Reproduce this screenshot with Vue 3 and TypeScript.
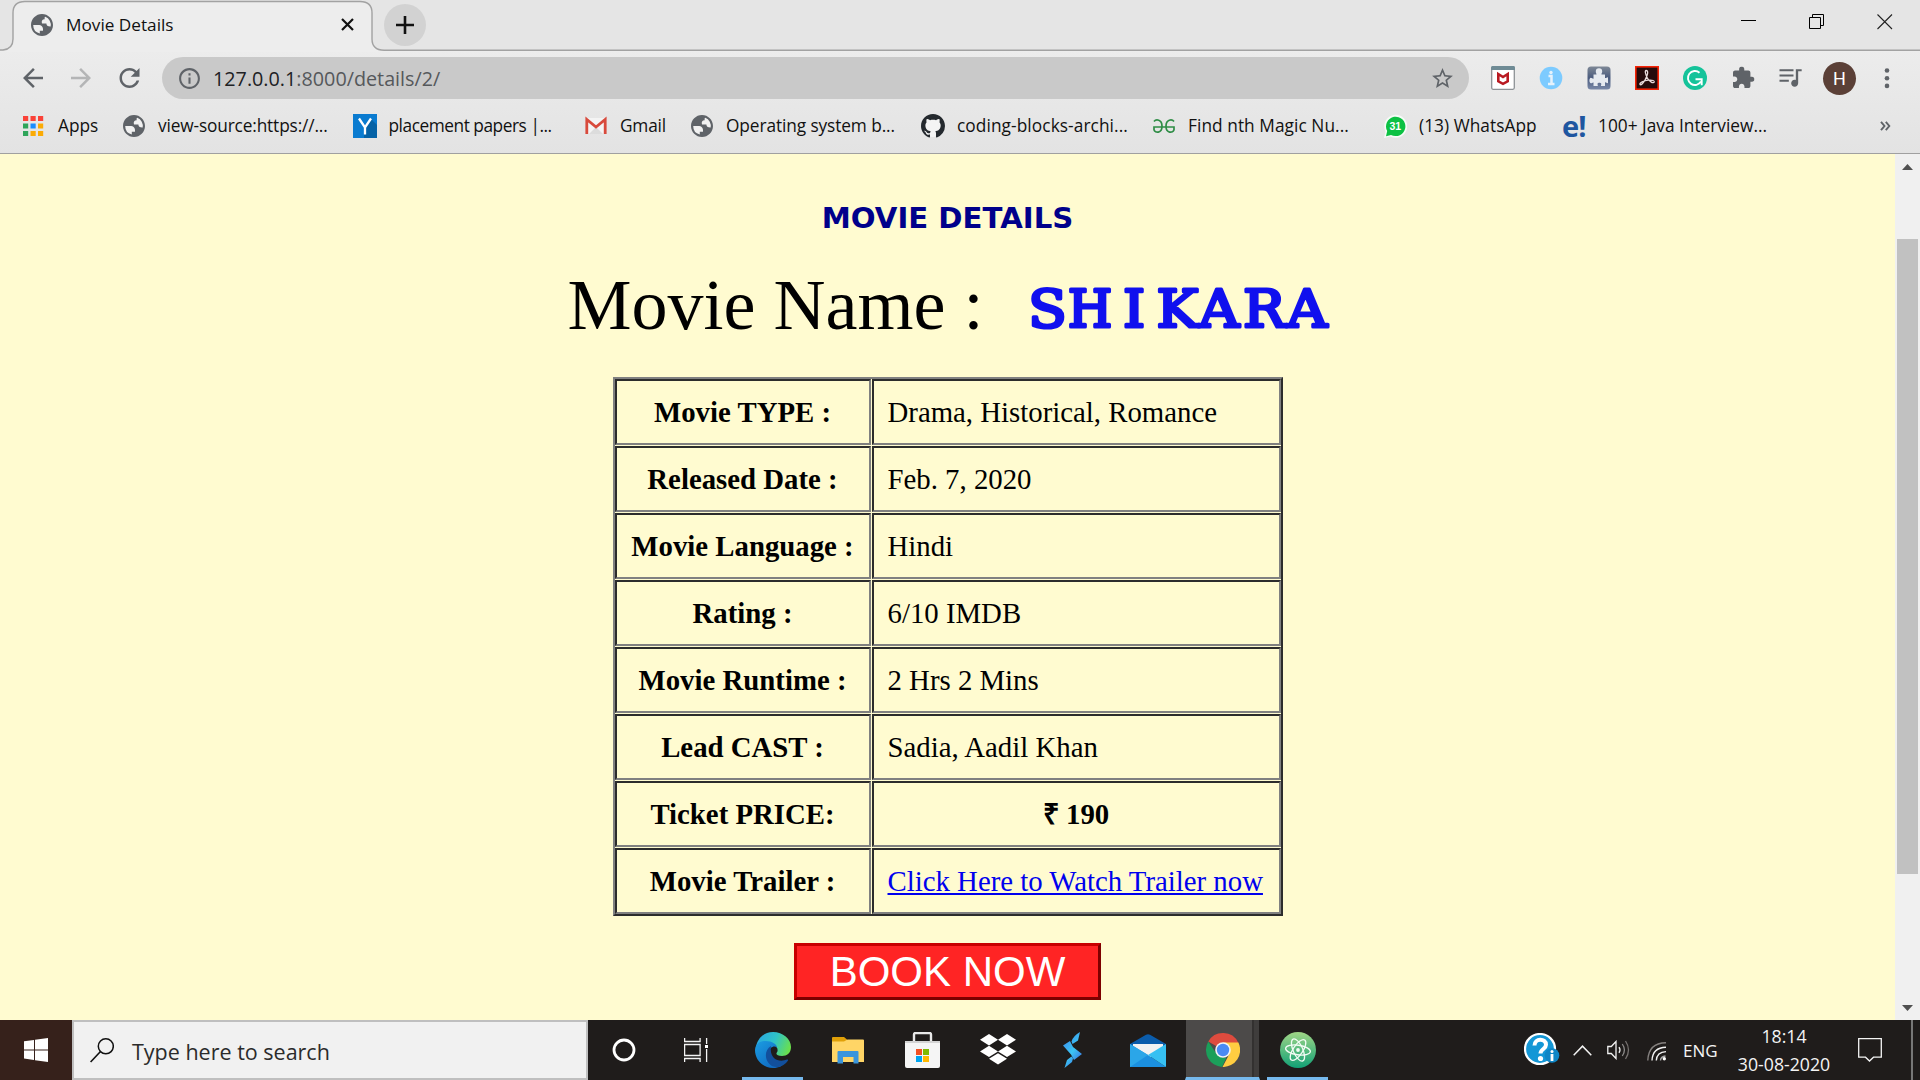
<script setup lang="ts">
interface Bookmark {
  icon: string
  label: string
  width: number
  spacing: number
}

interface Detail {
  label: string
  value: string
  kind: 'text' | 'price' | 'link'
}

const bookmarks: Bookmark[] = [
  { icon: 'apps', label: 'Apps', width: 100, spacing: 0 },
  { icon: 'globe', label: 'view-source:https://...', width: 230.5, spacing: -0.15 },
  { icon: 'yahoo', label: 'placement papers |...', width: 231.5, spacing: -0.46 },
  { icon: 'gmail', label: 'Gmail', width: 106, spacing: -0.2 },
  { icon: 'globe', label: 'Operating system b...', width: 231, spacing: -0.1 },
  { icon: 'github', label: 'coding-blocks-archi...', width: 231, spacing: 0.08 },
  { icon: 'gfg', label: 'Find nth Magic Nu...', width: 231, spacing: 0.06 },
  { icon: 'whatsapp', label: '(13) WhatsApp', width: 179, spacing: 0.05 },
  { icon: 'edureka', label: '100+ Java Interview...', width: 240, spacing: 0 },
]

const details: Detail[] = [
  { label: 'Movie TYPE :', value: 'Drama, Historical, Romance', kind: 'text' },
  { label: 'Released Date :', value: 'Feb. 7, 2020', kind: 'text' },
  { label: 'Movie Language :', value: 'Hindi', kind: 'text' },
  { label: 'Rating :', value: '6/10 IMDB', kind: 'text' },
  { label: 'Movie Runtime :', value: '2 Hrs 2 Mins', kind: 'text' },
  { label: 'Lead CAST :', value: 'Sadia, Aadil Khan', kind: 'text' },
  { label: 'Ticket PRICE:', value: '₹ 190', kind: 'price' },
  { label: 'Movie Trailer :', value: 'Click Here to Watch Trailer now', kind: 'link' },
]

const appColors = ['#fa4238', '#fa4238', '#fa4238', '#2fa55a', '#1a8cff', '#fbab05', '#2fa55a', '#fbab05', '#fbab05']
</script>

<template>
  <div class="screen">
    <svg class="defs" width="0" height="0" aria-hidden="true">
      <symbol id="globe" viewBox="2 2 20 20">
        <circle cx="12" cy="12" r="9.2" fill="#f1f1f1" />
        <path fill="#5f6368" d="M12 2C6.480 2 2 6.480 2 12s4.480 10 10 10 10-4.480 10-10S17.520 2 12 2zM4 12h4.400c3.400.02 4.900 1.730 4.500 5.120H10v2.650A8.020 8.020 0 0 1 4 12zm15.880 1.400c-2.600.1-3.900-.8-3.880-2.700h-4c-.67-2.600.1-4 2.400-4V5.200a1.500 1.500 0 0 1 .6-.7A8.020 8.020 0 0 1 19.880 13.400z" />
      </symbol>
      <symbol id="puzzle" viewBox="2 1 21 21">
        <path d="M20.500 11H19V7c0-1.100-.9-2-2-2h-4V3.500C13 2.120 11.880 1 10.500 1S8 2.120 8 3.500V5H4c-1.100 0-1.990.9-1.990 2v3.800H3.500c1.490 0 2.700 1.210 2.700 2.700s-1.210 2.700-2.700 2.700H2V20c0 1.100.9 2 2 2h3.800v-1.500c0-1.490 1.210-2.700 2.700-2.700 1.490 0 2.700 1.210 2.700 2.700V22H17c1.100 0 2-.9 2-2v-4h1.500c1.380 0 2.500-1.120 2.500-2.500S21.880 11 20.500 11z" />
      </symbol>
    </svg>

    <header class="chrome">
      <div class="titlebar">
        <svg class="tab-shape" width="1920" height="52" viewBox="0 0 1920 52">
          <path d="M0 50H3Q13 49 13 39V13Q13 1.500 25 1.500H360Q372 1.500 372 13V39Q372 50 384 50.300H1920V52H0Z" fill="#ededed" />
          <path d="M0 50H3Q13 49 13 39V13Q13 1.500 25 1.500H360Q372 1.500 372 13V39Q372 50 384 50.300H1920" fill="none" stroke="#a2a2a2" stroke-width="1.400" />
        </svg>
        <div class="tab">
          <svg class="fav" width="22" height="22"><use href="#globe" /></svg>
          <span class="tab-title">Movie Details</span>
          <svg class="tab-close" width="13" height="13" viewBox="0 0 13 13"><path d="M1 1l11 11M12 1L1 12" stroke="#111" stroke-width="2.200" /></svg>
        </div>
        <div class="new-tab">
          <svg width="18" height="18" viewBox="0 0 18 18"><path d="M9 0v18M0 9h18" stroke="#111" stroke-width="2.600" /></svg>
        </div>
        <div class="win-controls">
          <svg width="16" height="16" viewBox="0 0 16 16"><path d="M0 6.500h15" stroke="#000" /></svg>
          <svg width="16" height="16" viewBox="0 0 16 16"><path d="M.5 3.500h11v11H.5zM3.500 3.500V.5h11v11h-3" fill="none" stroke="#000" /></svg>
          <svg width="16" height="16" viewBox="0 0 16 16"><path d="M.5.5l14.500 14.500M15 .5L.5 15" stroke="#222" stroke-width="1.100" /></svg>
        </div>
      </div>

      <div class="toolbar">
        <div class="nav">
          <svg width="30" height="30" viewBox="0 0 24 24" fill="#5f6368"><path d="M20 11H7.830l5.590-5.590L12 4l-8 8 8 8 1.410-1.410L7.830 13H20v-2z" /></svg>
          <svg width="30" height="30" viewBox="0 0 24 24" fill="#b4b5b6"><path d="M12 4l-1.410 1.410L16.170 11H4v2h12.170l-5.580 5.590L12 20l8-8z" /></svg>
          <svg width="31" height="30" viewBox="0 0 24 24" fill="#5f6368"><path d="M17.650 6.350C16.200 4.900 14.210 4 12 4c-4.420 0-7.990 3.580-7.990 8s3.570 8 7.990 8c3.730 0 6.840-2.550 7.730-6h-2.080c-.82 2.330-3.040 4-5.650 4-3.310 0-6-2.690-6-6s2.690-6 6-6c1.660 0 3.140.69 4.220 1.780L13 11h7V4l-2.350 2.350z" /></svg>
        </div>
        <div class="omnibox">
          <svg width="25" height="25" viewBox="0 0 24 24" fill="#5f6368"><path d="M11 7h2v2h-2zm0 4h2v6h-2zm1-9C6.480 2 2 6.480 2 12s4.480 10 10 10 10-4.480 10-10S17.520 2 12 2zm0 18c-4.410 0-8-3.590-8-8s3.590-8 8-8 8 3.590 8 8-3.590 8-8 8z" /></svg>
          <span class="url"><span class="host">127.0.0.1</span>:8000/details/2/</span>
          <svg class="star" width="25" height="25" viewBox="0 0 24 24" fill="#5f6368"><path d="M22 9.240l-7.190-.62L12 2 9.190 8.630 2 9.240l5.460 4.730L5.820 21 12 17.270 18.180 21l-1.630-7.030L22 9.240zM12 15.400l-3.760 2.270 1-4.280-3.320-2.880 4.380-.38L12 6.100l1.710 4.040 4.380.38-3.320 2.880 1 4.280L12 15.400z" /></svg>
        </div>
        <div class="extensions">
          <svg width="24" height="24" viewBox="0 0 24 24">
            <rect x=".7" y=".7" width="22.600" height="22.600" rx="1.500" fill="#fff" stroke="#8d9296" stroke-width="1.300" />
            <path d="M0 1.500Q0 0 1.500 0h21Q24 0 24 1.500V4H0z" fill="#6f8b95" />
            <path d="M7.300 8v7.300L12 17.800l4.700-2.500V8L12 11z" fill="none" stroke="#b91a22" stroke-width="2.600" />
          </svg>
          <svg width="24" height="24" viewBox="0 0 24 24">
            <circle cx="12" cy="12" r="11.300" fill="#7dcbff" />
            <path d="M9.500 10h3v7M9 18h6.500" stroke="#e6f2fb" stroke-width="2.500" fill="none" /><circle cx="12" cy="6.500" r="1.700" fill="#e6f2fb" />
          </svg>
          <svg width="24" height="24" viewBox="0 0 24 24">
            <defs><linearGradient id="steel" x2="0" y2="1"><stop stop-color="#7e8896" /><stop offset=".5" stop-color="#4a5b7e" /><stop offset="1" stop-color="#7a89a8" /></linearGradient></defs>
            <rect x=".5" y=".5" width="23" height="23" rx="3.500" fill="url(#steel)" />
            <path d="M9.500 8.500C9.500 7.500 8.800 7 8.800 5.500a3.200 3.200 0 0 1 6.400 0c0 1.500-1 2-.7 3H18V12c1 .3 1.500-.8 3-.8v6c-1.500 0-2-1.100-3-.8V20h-4c-.2-1 .5-1.500.3-2.300-.6-1.400-3.300-1.300-3.800 0-.2.8.5 1.300.3 2.300H6.500v-3.500c-1-.3-1.500.8-2.600.8-2-.5-2-5 0-5.500 1.100 0 1.600 1.200 2.600.9V8.500z" fill="#e6eaf0" />
          </svg>
          <svg width="24" height="24" viewBox="0 0 24 24">
            <rect x=".8" y=".8" width="22.400" height="22.400" fill="#260b0b" stroke="#f62306" stroke-width="1.600" />
            <path d="M11 4.500c3 0 1.500 5-1 9.500-1.500 3-4 5.500-5 4.500-1-1.500 4-4 8.500-4.300 4.500-.3 6 .5 5.700 1.800-.8 2-5.500-.9-7.200-4.600C10.700 8.500 9.500 4.800 11 4.500z" fill="none" stroke="#eadcdc" stroke-width="1.300" />
          </svg>
          <svg width="24" height="24" viewBox="0 0 24 24">
            <circle cx="12" cy="12" r="12" fill="#15c39a" />
            <path d="M16.500 6.700A7 7 0 1 0 18 15.500" fill="none" stroke="#fff" stroke-width="1.900" />
            <path d="M12.500 13.300h6.200v6" fill="none" stroke="#fff" stroke-width="1.900" />
          </svg>
          <svg width="24" height="24" viewBox="0 0 24 24" fill="#5f6368"><use href="#puzzle" x="2" y=".5" width="21.500" height="21.500" /></svg>
          <svg width="28" height="28" viewBox="0 0 24 24" fill="#5f6368"><path d="M15 4.600H3v1.700h12V4.600zm0 4.500H3v1.700h12V9.100zM3 15.300h8v-1.700H3v1.700zM17 4.600v9.180c-.31-.11-.65-.18-1-.18-1.660 0-3 1.340-3 3s1.340 3 3 3 3-1.340 3-3V6.300h3V4.600h-5z" /></svg>
        </div>
        <div class="avatar">H</div>
        <svg class="menu" width="6" height="21" viewBox="0 0 6 21" fill="#5f6368"><circle cx="3" cy="2.500" r="2.300" /><circle cx="3" cy="10.200" r="2.300" /><circle cx="3" cy="17.900" r="2.300" /></svg>
      </div>

      <nav class="bookmarks">
        <div v-for="b in bookmarks" :key="b.label" class="bookmark" :style="{ width: b.width + 'px' }">
          <svg v-if="b.icon === 'apps'" width="24" height="24" viewBox="0 0 24 24">
            <rect v-for="(c, i) in appColors" :key="i" :x="1 + (i % 3) * 7.500" :y="2 + Math.floor(i / 3) * 7.500" width="5.200" height="5" :fill="c" />
          </svg>
          <svg v-else-if="b.icon === 'globe'" width="24" height="24"><use href="#globe" x="1" y="1" width="22" height="22" /></svg>
          <svg v-else-if="b.icon === 'yahoo'" width="24" height="24" viewBox="0 0 24 24">
            <rect width="24" height="24" fill="#0a7bd0" /><path d="M17 4l7 7v13H11V18z" fill="#0562a6" />
            <path d="M6 4.500l6 9 6-9M12 13v7.500" stroke="#fff" stroke-width="2.300" fill="none" />
          </svg>
          <svg v-else-if="b.icon === 'gmail'" width="24" height="24" viewBox="0 0 24 24">
            <rect x="2" y="4" width="20" height="16" rx="1" fill="#f4f4f4" /><path d="M5 20l7-7 7 7z" fill="#dcdcdc" />
            <path d="M2.800 20V5.500L12 13l9.200-7.500V20" fill="none" stroke="#d84a3c" stroke-width="2.800" />
          </svg>
          <svg v-else-if="b.icon === 'github'" width="24" height="24" viewBox="0 0 16 16">
            <circle cx="8" cy="8" r="7.300" fill="#f4f4f4" />
            <path fill="#24292e" d="M8 0C3.580 0 0 3.580 0 8c0 3.540 2.290 6.530 5.470 7.590.4.07.55-.17.55-.38 0-.19-.01-.82-.01-1.490-2.010.37-2.530-.49-2.690-.94-.09-.23-.48-.94-.82-1.130-.28-.15-.68-.52-.01-.53.63-.01 1.080.58 1.230.82.72 1.210 1.870.87 2.330.66.07-.52.28-.87.51-1.070-1.780-.2-3.640-.89-3.640-3.950 0-.87.31-1.590.82-2.150-.08-.2-.36-1.020.08-2.120 0 0 .67-.21 2.200.82.64-.18 1.320-.27 2-.27s1.360.09 2 .27c1.530-1.040 2.200-.82 2.200-.82.44 1.100.16 1.920.08 2.120.51.56.82 1.270.82 2.150 0 3.070-1.870 3.750-3.650 3.950.29.25.54.73.54 1.480 0 1.070-.01 1.930-.01 2.200 0 .21.15.46.55.38A8.010 8.010 0 0 0 16 8c0-4.420-3.580-8-8-8z" />
          </svg>
          <svg v-else-if="b.icon === 'gfg'" width="24" height="24" viewBox="0 0 24 24" fill="none" stroke="#2f8d46" stroke-width="1.700">
            <path d="M2 7.500c2-2.500 8-2.300 8 4.700s-7 7.500-8 3.500v-2.700h10" /><path d="M22 7.500c-2-2.500-8-2.300-8 4.700s7 7.500 8 3.500v-2.700H12" />
          </svg>
          <svg v-else-if="b.icon === 'whatsapp'" width="24" height="24" viewBox="0 0 24 24">
            <path d="M1 24l1.500-6.500A11.500 11.500 0 1 1 7.500 22.500z" fill="#f6fbf7" /><path d="M3 22.300l1.200-5.200A9.700 9.700 0 1 1 8 20.900z" fill="#0cc143" />
            <text x="12.300" y="16" text-anchor="middle" class="badge">31</text>
          </svg>
          <span v-else class="edureka">e!</span>
          <span class="bookmark-label" :style="{ letterSpacing: b.spacing + 'px' }">{{ b.label }}</span>
        </div>
        <svg class="overflow" width="11" height="10" viewBox="0 0 11 10"><path d="M1 .8L4.500 5 1 9.200M5.800.8L9.300 5 5.800 9.200" fill="none" stroke="#5f6368" stroke-width="1.900" /></svg>
      </nav>
    </header>

    <div class="viewport">
      <main class="page">
        <h2>MOVIE DETAILS</h2>
        <div class="movie">
          <span class="movie-key">Movie Name :</span>
          <svg class="movie-title" width="310" height="60" viewBox="0 0 310 60">
            <text transform="scale(1.08 1)" x="19.900 59.300 100 140.300 178.700 220.400 260.200" y="47.500">S<tspan class="narrow">H</tspan>IKARA</text>
          </svg>
        </div>
        <div class="table">
          <template v-for="d in details" :key="d.label">
            <div class="cell head">{{ d.label }}</div>
            <div class="cell" :class="d.kind">
              <a v-if="d.kind === 'link'">{{ d.value }}</a>
              <template v-else>{{ d.value }}</template>
            </div>
          </template>
        </div>
        <button class="book">BOOK NOW</button>
      </main>
      <aside class="scrollbar">
        <svg width="11" height="6" viewBox="0 0 11 6"><path d="M0 6L5.500 0 11 6z" fill="#505050" /></svg>
        <div class="thumb"></div>
        <svg class="down" width="11" height="6" viewBox="0 0 11 6"><path d="M0 0h11L5.500 6z" fill="#505050" /></svg>
      </aside>
    </div>

    <footer class="taskbar">
      <div class="start">
        <svg width="24" height="24" viewBox="0 0 24 24" fill="#fff"><path d="M0 3.300l10-1.400v9.500H0zM11 1.800L24 0v11.400H11zM0 12.500h10V22L0 20.600zM11 12.500h13V24l-13-1.800z" /></svg>
      </div>
      <div class="search">
        <svg width="24" height="25" viewBox="0 0 24 25"><circle cx="15.800" cy="8.300" r="7.500" fill="none" stroke="#111" stroke-width="1.500" /><path d="M10.500 13.500L.6 24" stroke="#111" stroke-width="1.600" /></svg>
        <span>Type here to search</span>
      </div>
      <div class="sys"><svg width="24" height="24" viewBox="0 0 24 24"><circle cx="12" cy="12" r="10" fill="none" stroke="#fff" stroke-width="2.800" /></svg></div>
      <div class="sys">
        <svg width="24" height="24" viewBox="0 0 24 24" fill="none" stroke="#f4f4f4" stroke-width="1.300"><path d="M.6 0v3.500h15.500V0M.6 6.500h15.500v11H.6zM.6 24v-3.500h15.500V24M22.600 0v6M22.600 11v13" /><path d="M21 7h3.200v3H21z" fill="#fff" stroke="none" /></svg>
      </div>
      <div class="apps">
        <div class="app running">
          <svg width="36" height="36" viewBox="0 0 36 36">
            <defs>
              <linearGradient id="eg" x1="0" y1=".3" x2="1" y2=".6"><stop stop-color="#2aa7e0" /><stop offset=".5" stop-color="#2fc3c8" /><stop offset="1" stop-color="#6be04a" /></linearGradient>
              <linearGradient id="eb" x1="0" y1="0" x2="1" y2="1"><stop stop-color="#1b9de2" /><stop offset="1" stop-color="#0d5cb8" /></linearGradient>
            </defs>
            <path d="M1 15C2.500 6 9.500 0 18 0c10 0 18 7 18 15 0 6-4 9-9 9-4 0-6-1.500-5.500-3 1.500-1.500 1.500-4 0-6C18 10 7 7 1 15z" fill="url(#eg)" />
            <path d="M0 18C.5 11 6 9 10.500 9c7 0 12 4 11.500 6.500-3-2.500-8 0-7.500 5.500.5 8 9 11.500 17 7.500C28.500 33.500 24 36 18 36 8 36 0 28 0 18z" fill="url(#eb)" />
            <path d="M16 14c-7 4-7 15 1 20 7 3 13-1 16-5.500.4-1-.2-1.300-1-.9C24 31 14 27 16 14z" fill="#124f9c" />
          </svg>
        </div>
        <div class="app">
          <svg width="32" height="27" viewBox="0 0 32 27"><path d="M0 1Q0 0 1 0h11l3 2.500V6H0z" fill="#e0a008" /><path d="M0 4.500h12l3.500-2H31q1 0 1 1V25H0z" fill="#ffd566" /><path d="M5.500 26.500V15q0-1 1-1h19q1 0 1 1v11.500h-5V20H11v6.500z" fill="#3b95dc" /></svg>
        </div>
        <div class="app">
          <svg width="36" height="36" viewBox="0 0 36 36"><path d="M9 12V2.500Q9 1 10.500 1h14Q26 1 26 2.500V12" fill="none" stroke="#e9e9e9" stroke-width="2.400" /><path d="M0 9h35v25q0 2-2 2H2q-2 0-2-2z" fill="#f5f5f5" /><path d="M0 9h35v2H0z" fill="#d4d4d4" /><path d="M11 17h6v6h-6z" fill="#f25022" /><path d="M18 17h6v6h-6z" fill="#7fba00" /><path d="M11 24h6v6h-6z" fill="#00a4ef" /><path d="M18 24h6v6h-6z" fill="#ffb900" /></svg>
        </div>
        <div class="app">
          <svg width="36" height="32" viewBox="0 0 36 32" fill="#fff"><path d="M9 0l9 5.700-9 5.700-9-5.700zM27 0l9 5.700-9 5.700-9-5.700zM9 11.800l9 5.700-9 5.600-9-5.600zM27 11.800l9 5.700-9 5.600-9-5.600zM9 24.800l9-5.600 9 5.600-9 5.700z" /></svg>
        </div>
        <div class="app">
          <svg width="19" height="36" viewBox="0 0 19 36"><defs><linearGradient id="sg" x1="0" y1="0" x2=".7" y2="1"><stop stop-color="#3b7fe8" /><stop offset=".6" stop-color="#3cc5f5" /><stop offset="1" stop-color="#3a6fe0" /></linearGradient></defs><path d="M17 0L15 8.500 9.500 12 8.500 9.500Q10 4 17 0zM7 9l3 6 9 7-8 6-3-5.500L0 13.500zM10 26.500l-1 3.500L1.500 36 4 28l4.500-3.500z" fill="url(#sg)" /></svg>
        </div>
        <div class="app">
          <svg width="36" height="33" viewBox="0 0 36 33"><path d="M0 10L16 .8q2-1.200 4 0L36 10v10H0z" fill="#0b5cab" /><path d="M3 10h30v8L18 24 3 18z" fill="#f2f2f2" /><path d="M0 10l18 11 18 12H0z" fill="#1b90e0" /><path d="M36 10L18 21l18 12z" fill="#36c0f2" /><path d="M0 10l18 11L0 33z" fill="#2ba6e8" /></svg>
        </div>
        <div class="app active">
          <svg width="34" height="34" viewBox="0 0 34 34">
            <path d="M17 17L2.280 8.500A17 17 0 0 1 32.300 9.700L30 12z" fill="#dd4b3e" />
            <path d="M17 9.500h15.400A17 17 0 0 1 16.500 34L23.500 20.800z" fill="#ffcd41" />
            <path d="M2.280 8.500L10.500 20.800 17 24.500l3.300.2L16 34A17 17 0 0 1 2.280 8.500z" fill="#1b9f5a" />
            <circle cx="17" cy="17" r="7.800" fill="#f4f4f4" /><circle cx="17" cy="17" r="6.200" fill="#4a8af4" />
          </svg>
        </div>
        <div class="app running">
          <svg width="36" height="36" viewBox="0 0 36 36"><defs><linearGradient id="ag" x2="0" y2="1"><stop stop-color="#9fd586" /><stop offset="1" stop-color="#12a176" /></linearGradient></defs><circle cx="18" cy="18" r="18" fill="url(#ag)" /><g fill="none" stroke="#f2fbf4" stroke-width="1.300"><ellipse cx="18" cy="18" rx="12.500" ry="4.800" transform="rotate(8 18 18)" /><ellipse cx="18" cy="18" rx="12" ry="4.800" transform="rotate(66 18 18)" /><ellipse cx="18" cy="18" rx="12" ry="4.800" transform="rotate(-56 18 18)" /></g><circle cx="18" cy="18" r="1.900" fill="#f2fbf4" /></svg>
        </div>
      </div>
      <div class="tray">
        <svg class="help" width="37" height="34" viewBox="0 0 37 34"><circle cx="16" cy="16" r="15" fill="#1497d6" stroke="#fff" stroke-width="2.200" /><path d="M10.500 12.500c0-7.500 11.500-7.500 11.500-.8 0 4.300-5.500 4.300-5.500 8.800" fill="none" stroke="#fff" stroke-width="4" /><circle cx="16.500" cy="25.500" r="2.600" fill="#fff" /><circle cx="28" cy="22.500" r="7.300" fill="#0f86c6" /><path d="M28 21v7" stroke="#fff" stroke-width="2.800" /><circle cx="28" cy="18.500" r="1.500" fill="#fff" /></svg>
        <svg class="chevron" width="19" height="11" viewBox="0 0 19 11"><path d="M.7 10.300L9.500 1.200l8.800 9.100" fill="none" stroke="#f2f2f2" stroke-width="1.500" /></svg>
        <svg class="speaker" width="23" height="20" viewBox="0 0 23 20" fill="none" stroke="#f2f2f2" stroke-width="1.300"><path d="M.8 6.500h3.500L9 1.500v17l-4.700-5H.8z" /><path d="M12 7.200q2 2.800 0 5.600" /><path d="M15.300 4q4.200 6 0 12" stroke="#8d8b8a" /><path d="M18.500 1q6 9 0 18" stroke="#75716f" /></svg>
        <svg class="wifi" width="20" height="20" viewBox="0 0 20 20" fill="none" stroke="#f2f2f2" stroke-width="1.400"><path d="M.8 19.500Q1.500 2 19 1.800" stroke="#85817f" /><path d="M5 19.500Q5.500 6.500 19 6.200" /><path d="M9.300 19.500Q9.800 11 19 10.600" /><path d="M13.500 19.500Q13.800 15.500 18.500 15" stroke="#aaa" /><circle cx="17.300" cy="17.800" r="1.700" fill="#fff" stroke="none" /></svg>
        <span class="lang">ENG</span>
        <div class="clock"><span>18:14</span><span>30-08-2020</span></div>
        <svg class="notes" width="24" height="24" viewBox="0 0 24 24"><path d="M.7.7h22.600v18.500H15.500L11.500 23l-4-3.800H.7z" fill="none" stroke="#f4f4f4" stroke-width="1.300" /></svg>
        <div class="peek"></div>
      </div>
    </footer>
  </div>
</template>

<style>
body {
  margin: 0;
  overflow: hidden;
}
</style>

<style scoped>
.screen {
  width: 1920px;
  height: 1080px;
  display: flex;
  flex-direction: column;
  overflow: hidden;
  font-family: "Open Sans", "Noto Sans", sans-serif;
}
.defs {
  position: absolute;
}
svg {
  display: block;
  flex: none;
}
.chrome {
  height: 153px;
  border-bottom: 1px solid #a0a0a0;
  background: linear-gradient(#ececec 50px, #e3e3e3 153px);
}
.titlebar {
  position: relative;
  display: flex;
  height: 51px;
  background: #e5e5e5;
}
.tab-shape {
  position: absolute;
  left: 0;
  top: 0;
}
.tab,
.new-tab,
.win-controls {
  position: relative;
}
.tab {
  width: 323px;
  height: 49px;
  padding-left: 31px;
  display: flex;
  align-items: center;
}
.tab-title {
  width: 275px;
  margin-left: 13px;
  font-size: 17.200px;
  white-space: nowrap;
  color: #111;
}
.new-tab {
  display: flex;
  align-items: center;
  justify-content: center;
  width: 42px;
  height: 42px;
  margin: 4px 0 0 30px;
  border-radius: 50%;
  background: #d2d2d2;
}
.win-controls {
  display: flex;
  gap: 52px;
  margin: 14px 27px 0 auto;
}
.toolbar {
  display: flex;
  align-items: center;
  height: 54px;
}
.nav {
  display: flex;
  gap: 18px;
  width: 144px;
  padding-left: 18px;
}
.omnibox {
  display: flex;
  align-items: center;
  box-sizing: border-box;
  width: 1307px;
  height: 42px;
  padding: 0 14px 0 15px;
  border-radius: 21px;
  background: #c9c9c9;
}
.url {
  margin-left: 11px;
  font-size: 19.750px;
  color: #55585b;
}
.host {
  color: #202124;
}
.star {
  margin-left: auto;
}
.extensions {
  display: flex;
  align-items: center;
  gap: 24px;
  width: 332px;
  padding-left: 22px;
}
.extensions svg:last-child {
  margin-left: -3px;
}
.avatar {
  width: 33px;
  height: 33px;
  border-radius: 50%;
  background: #5b4037;
  color: #fff;
  font: 18px/33px Roboto, sans-serif;
  text-align: center;
}
.menu {
  margin-left: 28px;
}
.bookmarks {
  display: flex;
  align-items: center;
  height: 42px;
  padding-left: 22px;
}
.bookmark {
  display: flex;
  align-items: center;
}
.bookmark-label {
  margin: -1px 0 0 12px;
  font-size: 17.300px;
  white-space: nowrap;
  color: #111;
}
.edureka {
  width: 24px;
  font: bold 29px/26px "Open Sans", sans-serif;
  letter-spacing: -1px;
  color: #1e56a0;
}
.badge {
  font: bold 10.500px "Liberation Sans", sans-serif;
  fill: #fff;
}
.overflow {
  margin: 0 29px 0 auto;
}
.viewport {
  display: flex;
  height: 866px;
}
.page {
  display: flex;
  flex-direction: column;
  align-items: center;
  width: 1895px;
  background: #fffbd0;
  font-family: "Liberation Serif", serif;
}
h2 {
  margin: 47px 0 0;
  font: bold 29.200px/34px "DejaVu Sans", sans-serif;
  color: #00008b;
}
.movie {
  display: flex;
  margin-top: 30px;
  padding-left: 8px;
  height: 80px;
}
.movie-key {
  width: 458px;
  font-size: 72px;
  line-height: 80px;
  white-space: nowrap;
}
.movie-title {
  margin-top: 14px;
  overflow: visible;
}
.movie-title text {
  font: 52px "DejaVu Serif", serif;
  text-anchor: middle;
  fill: #1010ee;
  stroke: #1010ee;
  stroke-width: 3.200px;
  stroke-linejoin: round;
}
.movie-title .narrow {
  font-family: "DejaVu Serif Condensed", "DejaVu Serif", serif;
  font-stretch: condensed;
}
.table {
  display: grid;
  grid-template-columns: 256px 409px;
  gap: 1px;
  margin-top: 32px;
  border: 2px solid;
  border-color: #808080 #2c2c2c #2c2c2c #808080;
}
.cell {
  box-sizing: border-box;
  height: 66px;
  padding: 0 14px;
  border: 2px solid;
  border-color: #2c2c2c #808080 #808080 #2c2c2c;
  font-size: 28.800px;
  line-height: 63px;
  white-space: nowrap;
}
.head,
.price {
  text-align: center;
  font-weight: bold;
}
.head {
  padding: 0;
}
.cell a {
  color: #0000ee;
  text-decoration: underline;
}
.book {
  box-sizing: border-box;
  width: 307px;
  height: 57px;
  margin-top: 27px;
  padding: 0;
  border: 3px solid;
  border-color: #c80000 #7d0000 #7d0000 #c80000;
  background: #ff2424;
  color: #fff;
  font: 42px/51px "Liberation Sans", sans-serif;
}
.scrollbar {
  display: flex;
  flex-direction: column;
  align-items: center;
  box-sizing: border-box;
  width: 25px;
  padding: 10px 0 9px;
  background: #f0f0f0;
}
.thumb {
  width: 21px;
  height: 635px;
  margin-top: 69px;
  background: #c1c1c1;
}
.down {
  margin-top: auto;
}
.taskbar {
  display: flex;
  height: 60px;
  background: #1f1c1b;
  color: #f4f4f4;
}
.start {
  display: flex;
  align-items: center;
  justify-content: center;
  width: 72px;
  background: #36211b;
}
.search {
  display: flex;
  align-items: center;
  box-sizing: border-box;
  width: 516px;
  padding-left: 16px;
  border: 2px solid #bfbfbf;
  background: #f1f1f1;
  color: #2b2b2b;
}
.search span {
  margin: 3px 0 0 18px;
  font-size: 21.500px;
}
.sys {
  display: flex;
  align-items: center;
  justify-content: center;
  width: 72px;
}
.apps {
  display: flex;
  margin-left: 3px;
}
.app {
  position: relative;
  display: flex;
  align-items: center;
  justify-content: center;
  width: 75px;
}
.running::after {
  content: "";
  position: absolute;
  left: 7px;
  right: 7px;
  bottom: 0;
  height: 3px;
  background: #76b9ed;
}
.active {
  box-sizing: border-box;
  border-left: 1px solid #1f1c1b;
  border-right: 1px solid #1f1c1b;
  border-bottom: 3px solid #76b9ed;
  padding-top: 3px;
  background: linear-gradient(to right, #4c4a49 66px, #333130 66px, #333130 68px, #3f3d3c 68px);
}
.tray {
  display: flex;
  align-items: center;
  width: 585px;
  padding-left: 189px;
  box-sizing: border-box;
}
.chevron {
  margin-left: 12px;
}
.speaker {
  margin-left: 15px;
}
.wifi {
  margin: 2px 0 0 17px;
}
.lang {
  margin: 1px 0 0 16px;
  width: 35px;
  font-size: 17px;
}
.clock {
  display: flex;
  flex-direction: column;
  align-items: center;
  width: 98px;
  margin-left: 17px;
  font-size: 17.700px;
  line-height: 28px;
}
.notes {
  margin-left: 25px;
}
.peek {
  width: 2px;
  height: 60px;
  margin-left: 29px;
  background: #777;
}
</style>
